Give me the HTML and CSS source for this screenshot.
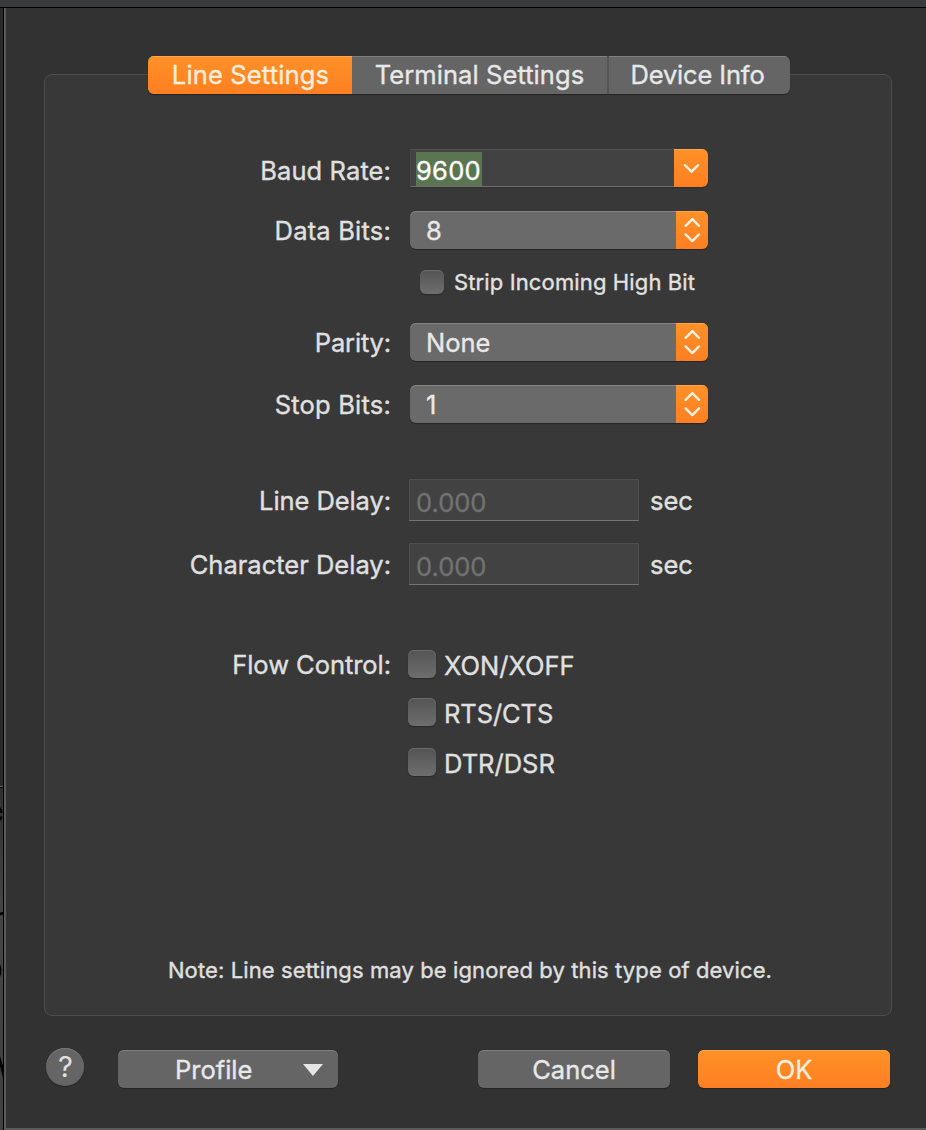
FILE: index.html
```html
<!DOCTYPE html>
<html lang="en">
<head>
<meta charset="utf-8">
<title>Line Settings</title>
<link rel="stylesheet" href="styles.css">
</head>
<body>
<svg width="0" height="0" class="defs" aria-hidden="true">
  <symbol id="updown" viewBox="0 0 32 38"><path d="M9.600 14.800l6.700-6.700 6.700 6.700M9.600 23.400l6.700 6.700 6.700-6.700"/></symbol>
  <symbol id="down" viewBox="0 0 34 38"><path d="M10.900 16.200l6.600 6.500 6.600-6.500"/></symbol>
</svg>
<div class="titlebar"></div>
<div class="screen">
  <div class="behind">
    <svg width="3" height="1122" viewBox="0 8 3 1122">
      <path class="seam" d="M0 786.5H3"/>
      <path class="dark" d="M0 787.5H3"/>
      <path class="ink" d="M0 807Q2.5 809 2.5 813H0ZM0 816.5H2.5Q2 820 0 821ZM0 912.5L3 912v2.5L0 915.500ZM0 964Q1.500 967 1.500 970.500T0 977ZM0 1056L3 1066v12L0 1066Z"/>
    </svg>
  </div>
  <main class="dialog">
    <section class="panel">
      <nav class="tabs">
        <button class="tab tab-line active"><span>Line Settings</span></button>
        <button class="tab tab-terminal"><span>Terminal Settings</span></button>
        <button class="tab tab-device"><span>Device Info</span></button>
      </nav>
      <div class="form">
        <div class="row baud">
          <label><span class="t-baud">Baud Rate:</span></label>
          <div class="combo"><div class="combo-text"><span class="selection">9600</span></div><svg class="arrow arrow-down"><use href="#down"/></svg></div>
        </div>
        <div class="row data">
          <label><span class="t-data">Data Bits:</span></label>
          <div class="popup"><span>8</span><svg class="arrow arrow-updown"><use href="#updown"/></svg></div>
        </div>
        <div class="row strip">
          <i class="check small"></i><span class="t-strip">Strip Incoming High Bit</span>
        </div>
        <div class="row parity">
          <label><span class="t-parity">Parity:</span></label>
          <div class="popup"><span class="t-none">None</span><svg class="arrow arrow-updown"><use href="#updown"/></svg></div>
        </div>
        <div class="row stop">
          <label><span class="t-stop">Stop Bits:</span></label>
          <div class="popup"><span>1</span><svg class="arrow arrow-updown"><use href="#updown"/></svg></div>
        </div>
        <div class="row delay line">
          <label><span class="t-linedelay">Line Delay:</span></label>
          <div class="field"><span>0.000</span></div><span class="unit">sec</span>
        </div>
        <div class="row delay char">
          <label><span class="t-chardelay">Character Delay:</span></label>
          <div class="field"><span>0.000</span></div><span class="unit">sec</span>
        </div>
        <div class="row flow">
          <label><span class="t-flow">Flow Control:</span></label>
          <i class="check"></i><span class="option t-xon">XON/XOFF</span>
        </div>
        <div class="row flow rts">
          <label></label>
          <i class="check"></i><span class="option t-rts">RTS/CTS</span>
        </div>
        <div class="row flow dtr">
          <label></label>
          <i class="check"></i><span class="option t-dtr">DTR/DSR</span>
        </div>
      </div>
      <p class="note"><span class="t-note">Note: Line settings may be ignored by this type of device.</span></p>
    </section>
    <footer class="footer">
      <button class="help"><span>?</span></button>
      <button class="btn profile"><span class="t-profile">Profile</span><svg width="20" height="12" viewBox="0 0 20 12"><path d="M0 0h20L10 12z"/></svg></button>
      <button class="btn cancel"><span class="t-cancel">Cancel</span></button>
      <button class="btn ok"><span class="t-ok">OK</span></button>
    </footer>
  </main>
</div>
</body>
</html>
```
FILE: styles.css
```css
* { box-sizing: border-box; }
body {
  margin: 0;
  height: 1130px;
  overflow: hidden;
  display: flex;
  flex-direction: column;
  background: #323232;
  color: #e0e0e0;
  font: 25.5px/38px Inter, "Liberation Sans", sans-serif;
  white-space: nowrap;
  -webkit-text-stroke: 0.35px currentColor;
}
button { border: 0; padding: 0; margin: 0; background: none; color: inherit; font: inherit; letter-spacing: inherit; }
.defs { position: absolute; }
.titlebar { height: 8px; flex: none; background: #3a3b3d; border-bottom: 1px solid #000; }
.screen { display: flex; flex: 1; }
.behind { width: 4px; flex: none; border-right: 1px solid #000; background: linear-gradient(#292929 0, #292929 778px, #303030 780px, #454545 900px, #404040 100%); }
.behind svg { display: block; }
.seam { stroke: #666; }
.dark { stroke: #000; }
.ink { fill: #000; }
.dialog { flex: 1; border-left: 2px solid #5a5a5a; border-bottom: 2px solid #5a5a5a; padding: 66px 34px 0 38px; }

.panel { height: 942px; border: 1px solid #4e4e4e; border-radius: 8px; background: #383838; display: flex; flex-direction: column; }
.tabs { display: flex; width: 642px; height: 38px; margin: -19px 0 0 103px; border-radius: 6px; overflow: hidden; flex: none; background: #656565; box-shadow: 0 1px 1px #242424; }
.tab { height: 38px; box-shadow: inset 0 1px #808080; text-align: center; color: #e8e8e8; }
.tab span { display: block; }
.tab-line { width: 204px; letter-spacing: 0.15px; }
.tab-line span { padding-left: 1px; }
.tab-terminal { width: 257px; border-right: 2px solid #555; letter-spacing: 0.08px; }
.tab-device { width: 181px; letter-spacing: -0.15px; }
.tab-device span { padding-right: 4px; }
.active, .ok, .arrow { background: linear-gradient(#ff9127, #ff7f22); }
.active { box-shadow: inset 0 1px #ffa84f; color: #fdeedd; }

.form { padding-top: 55px; }
.row { display: flex; align-items: flex-start; height: 38px; }
.row label { width: 347px; flex: none; text-align: right; padding: 3px 1px 0 0; }
.row label span { display: inline-block; }
.t-baud { letter-spacing: 0.1px; }
.t-data, .t-stop { letter-spacing: 0.2px; }
.t-parity { letter-spacing: -0.15px; }
.t-linedelay { letter-spacing: -0.08px; }
.t-flow { letter-spacing: -0.05px; }
.combo, .popup { display: flex; justify-content: space-between; height: 38px; width: 298px; margin-left: 18px; border-radius: 6px; overflow: hidden; }
.popup { background: #6a6a6a; box-shadow: 0 1px 1px #262626, inset 0 1px #858585; padding-left: 16px; color: #e8e8e8; }
.popup > span { padding-top: 1px; }
.arrow { height: 38px; fill: none; stroke: #fff0df; stroke-width: 2.4; stroke-linecap: round; stroke-linejoin: round; flex: none; box-shadow: inset 0 1px #ffa84f; }
.arrow-updown { width: 32px; }
.arrow-down { width: 34px; }
.combo { border-radius: 0 6px 6px 0; box-shadow: 0 1px 1px #303030; }
.combo-text { flex: 1; background: #424242; border-top: 1px solid #515151; border-bottom: 1px solid #707070; border-left: 1px solid #484848; padding: 2px 0 0 5px; }
.selection { display: block; width: 66px; height: 34px; line-height: 38px; background: #5b7553; color: #fff; letter-spacing: 0.25px; }
.data { margin-top: 24px; }
.data label, .parity label, .stop label { padding-top: 1px; }
.strip { margin-top: 21px; height: 24px; padding-left: 375px; line-height: 24px; font-size: 22px; letter-spacing: 0.13px; color: #e2e2e2; }
.check { display: block; width: 28px; height: 28px; flex: none; border-radius: 6px; background: linear-gradient(#545454, #6e6e6e); box-shadow: inset 0 1px #6c6c6c, 0 1px 1px #292929; }
.small { width: 24px; height: 24px; margin-right: 10px; }
.parity { margin-top: 29px; }
.stop { margin-top: 24px; }
.delay { height: 42px; }
.line { margin-top: 56px; }
.char { margin-top: 22px; }
.field { width: 230px; height: 42px; margin-left: 17px; padding: 4px 6px 0; background: #424242; border: 1px solid #4e4e4e; border-bottom-color: #747474; color: #727272; }
.unit { margin-left: 11px; padding-top: 3px; }
.flow { margin-top: 65px; height: 28px; line-height: 28px; }
.flow label { padding-top: 1px; }
.flow .check { margin-left: 16px; }
.option { margin-left: 8px; padding-top: 2px; }
.t-rts { letter-spacing: -0.1px; }
.rts { margin-top: 20px; }
.dtr { margin-top: 22px; }
.note { margin: 174px 0 0; font-size: 22px; letter-spacing: 0.11px; text-align: center; line-height: 40px; padding-left: 4px; }

.footer { display: flex; padding: 32px 0 0 2px; }
.help { width: 38px; height: 38px; border-radius: 50%; background: #656565; box-shadow: 0 1px 1px #242424, inset 0 1px #787878; font-size: 29px; -webkit-text-stroke: 0; padding-left: 1px; }
.btn { height: 38px; margin-top: 2px; border-radius: 6px; background: #656565; box-shadow: 0 1px 1px #242424, inset 0 1px #7c7c7c; color: #e8e8e8; }
.btn span { display: inline-block; padding-top: 1px; }
.profile { width: 220px; margin-left: 34px; display: flex; align-items: center; justify-content: space-between; padding: 0 15px 0 57px; }
.profile svg { fill: #e6e6e6; margin-top: 2px; }
.cancel { width: 192px; margin-left: 140px; }
.ok { width: 192px; margin-left: 28px; background: linear-gradient(#ff9127, #ff7f22); box-shadow: 0 1px 1px #242424, inset 0 1px #ffa84f; color: #fdeedd; }
```
